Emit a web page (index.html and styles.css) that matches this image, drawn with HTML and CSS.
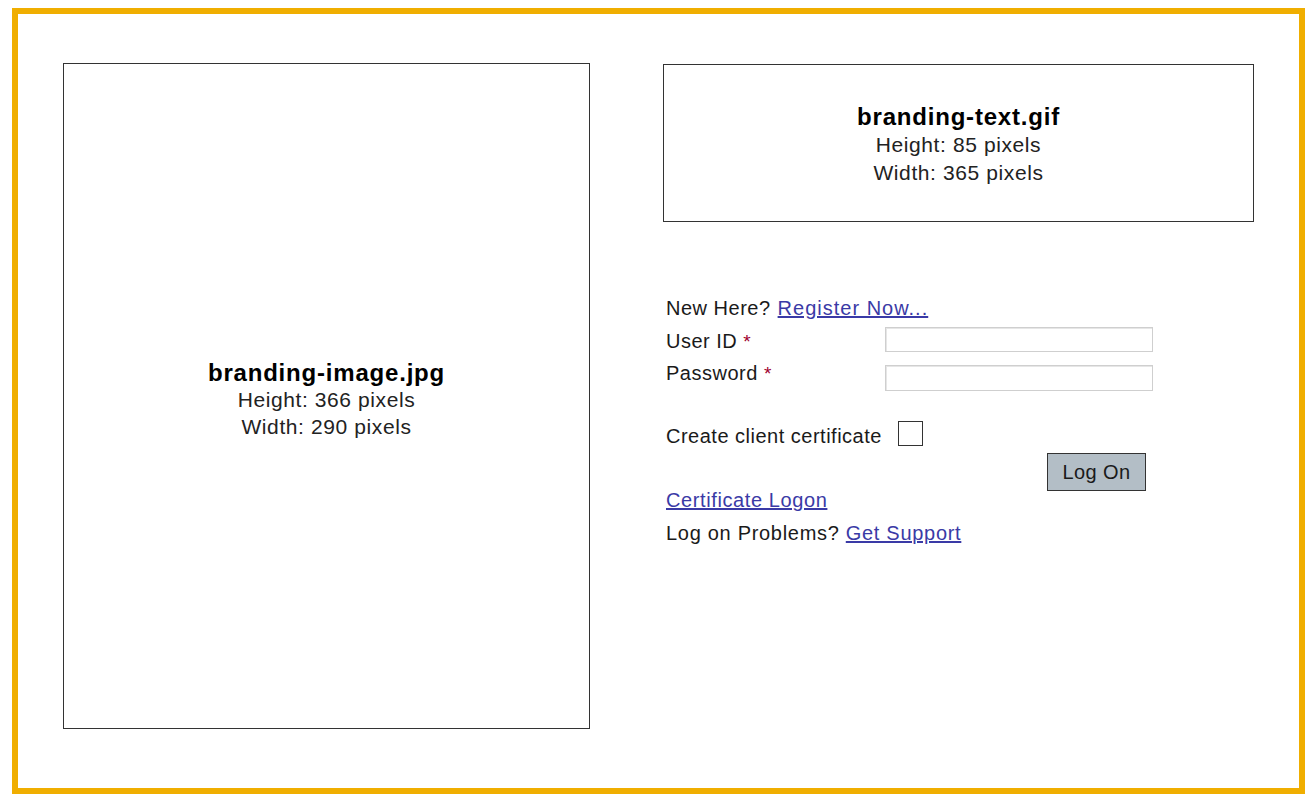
FILE: index.html
```html
<!DOCTYPE html>
<html>
<head>
<meta charset="utf-8">
<link rel="stylesheet" href="styles.css">
</head>
<body>
<div class="frame">
  <div class="image-box">
    <div class="ph">
      <div class="ph-title">branding-image.jpg</div>
      <div class="ph-line">Height: 366 pixels</div>
      <div class="ph-line">Width: 290 pixels</div>
    </div>
  </div>
  <div class="right">
    <div class="text-box">
      <div class="ph">
        <div class="ph-title">branding-text.gif</div>
        <div class="ph-line">Height: 85 pixels</div>
        <div class="ph-line">Width: 365 pixels</div>
      </div>
    </div>
    <form class="form">
      <div class="row">New Here? <a href="#" class="reg">Register Now...</a></div>
      <div class="fields">
        <div class="label l1">User ID <span class="req">*</span></div>
        <input class="inp i1" type="text">
        <div class="label l2">Password <span class="req">*</span></div>
        <input class="inp i2" type="password">
      </div>
      <div class="row cert">Create client certificate <span class="check"></span></div>
      <div class="btn-row"><button type="button" class="btn">Log On</button></div>
      <div class="row logon"><a href="#">Certificate Logon</a></div>
      <div class="row problems">Log on Problems? <a href="#">Get Support</a></div>
    </form>
  </div>
</div>
</body>
</html>
```
FILE: styles.css
```css
html, body {
  margin: 0;
  padding: 0;
  background: #ffffff;
}
body {
  font-family: "Liberation Sans", Arial, sans-serif;
  color: #111;
  width: 1316px;
  height: 799px;
  overflow: hidden;
}
.frame {
  box-sizing: border-box;
  margin: 8px 0 0 12px;
  width: 1293px;
  height: 786px;
  border: 6px solid #f0ae00;
  display: flex;
  align-items: flex-start;
  padding: 49px 0 0 45px;
}
.image-box {
  box-sizing: border-box;
  width: 527px;
  height: 666px;
  border: 1px solid #333;
  display: flex;
  align-items: center;
  justify-content: center;
  flex: none;
}
.ph {
  text-align: center;
  line-height: 27px;
  letter-spacing: 0.6px;
}
.image-box .ph { margin-top: 6px; }
.ph-title {
  font-weight: bold;
  font-size: 24px;
  letter-spacing: 0.8px;
  color: #000;
}
.ph-line {
  font-size: 21px;
  color: #222;
}
.right {
  margin-left: 73px;
  width: 591px;
  flex: none;
}
.text-box {
  box-sizing: border-box;
  margin-top: 1px;
  width: 591px;
  height: 158px;
  border: 1px solid #333;
  display: flex;
  align-items: center;
  justify-content: center;
}
.text-box .ph { line-height: 28px; margin-top: 4px; }
.form {
  margin: 74px 0 0 0;
  padding-left: 3px;
  display: flex;
  flex-direction: column;
  font-size: 20px;
  line-height: 24px;
  letter-spacing: 0.5px;
  color: #1a1a1a;
}
a {
  color: #3a3aa6;
  text-decoration: underline;
}
.reg { letter-spacing: 1px; margin-left: 1px; }
.req {
  color: #a0002e;
  font-size: 19px;
  line-height: 1;
}
.fields {
  display: grid;
  grid-template-columns: 219px 268px;
  margin-top: 5px;
}
.label { line-height: 24px; }
.l1 { padding-top: 4px; }
.l2 { padding-top: 8px; }
.inp {
  box-sizing: border-box;
  width: 268px;
  height: 25px;
  border: 1px solid #cfcfcf;
  box-shadow: inset 1px 1px 0 #e6e6e6;
  background: #fff;
  padding: 0;
  margin: 0;
}
.i1 { margin-top: 2px; }
.i2 { margin-top: 12px; height: 26px; }
.cert {
  display: flex;
  align-items: flex-start;
  height: 24px;
  margin-top: 33px;
  white-space: pre;
}
.check {
  box-sizing: border-box;
  flex: none;
  width: 25px;
  height: 25px;
  border: 1px solid #333;
  background: #fff;
  margin-left: 10px;
  margin-top: -3px;
}
.btn-row {
  margin-top: 5px;
  margin-bottom: -3px;
  height: 38px;
}
.btn {
  box-sizing: border-box;
  margin-left: 381px;
  width: 99px;
  height: 38px;
  background: #b3bec6;
  border: 1px solid #333;
  font-family: "Liberation Sans", Arial, sans-serif;
  font-size: 20px;
  letter-spacing: 0.4px;
  color: #1a1a1a;
  padding: 0;
}
.logon { margin-top: 0; letter-spacing: 0.6px; }
.problems { margin-top: 9px; letter-spacing: 0.7px; }
```
